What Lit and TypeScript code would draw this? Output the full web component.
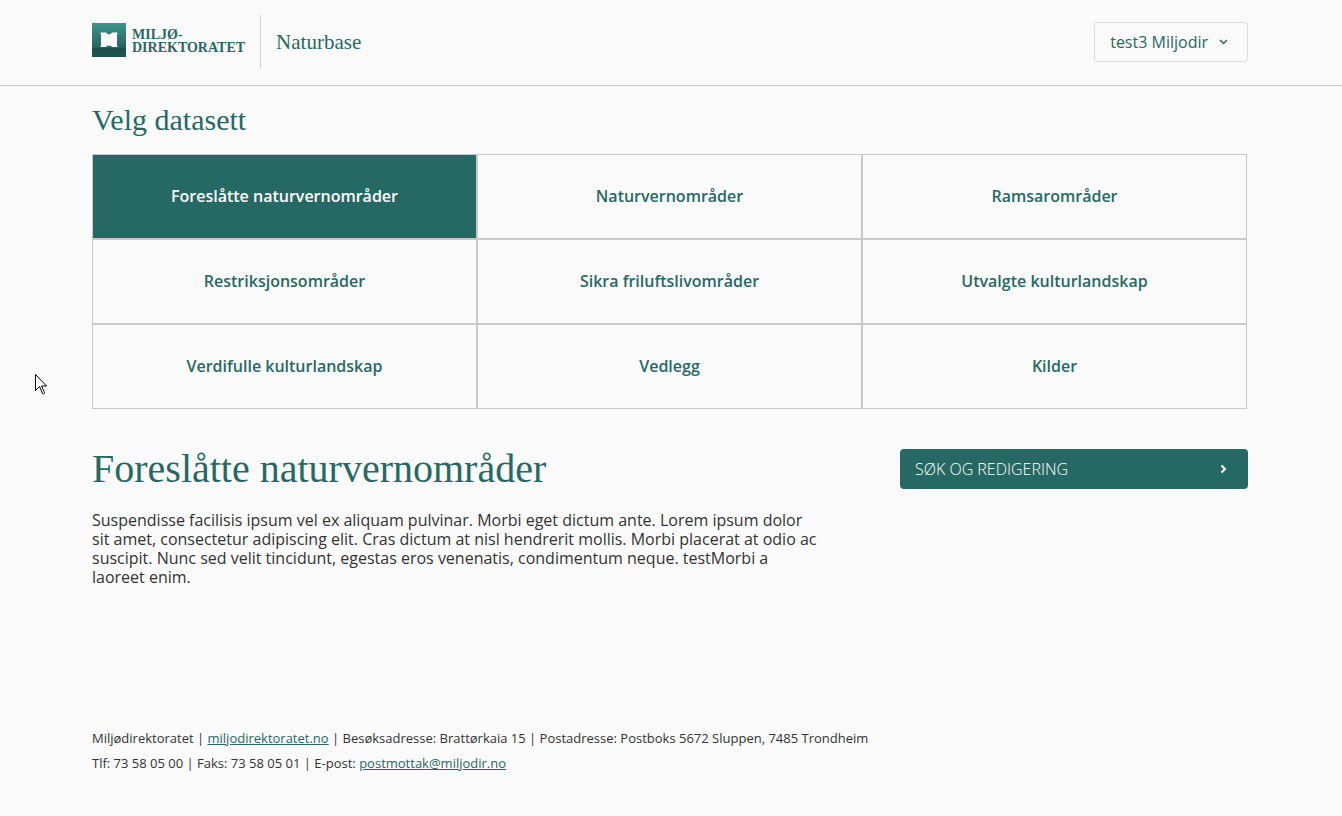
import { LitElement, html, css } from "lit";
import { customElement, state } from "lit/decorators.js";
import { classMap } from "lit/directives/class-map.js";

const DATASETS = [
  "Foreslåtte naturvernområder",
  "Naturvernområder",
  "Ramsarområder",
  "Restriksjonsområder",
  "Sikra friluftslivområder",
  "Utvalgte kulturlandskap",
  "Verdifulle kulturlandskap",
  "Vedlegg",
  "Kilder",
];

@customElement("app-root")
export class AppRoot extends LitElement {
  static styles = css`
    :host {
      --green: #266964;
      --line: #c9c9c9;
      --serif: "Liberation Serif", "Times New Roman", serif;
      display: block;
      position: relative;
      min-height: 100vh;
      background: #fafafa;
      color: #333;
      font: 400 16px/19px "Open Sans", sans-serif;
    }
    *, *::before, *::after { box-sizing: border-box; }
    .band { padding: 0 2px 0 0; }
    .shell { width: calc(100% - 40px); max-width: 1156px; margin: 0 auto; }
    .header { border-bottom: 1px solid var(--line); }
    .bar { display: flex; align-items: center; justify-content: space-between; padding: 15px 0 16px; }
    .brand { display: flex; align-items: center; }
    .logo { display: flex; align-items: center; gap: 6px; color: var(--green); text-decoration: none; margin: 0 15px 4px 0; }
    .mark { display: block; width: 34px; height: 34px; }
    .owner { padding-top: 2px; font: 700 14px/13px var(--serif); }
    .product { display: flex; align-items: center; height: 54px; padding-left: 15px; border-left: 1px solid #d5d5d5; color: var(--green); font: 400 21px/24px var(--serif); }
    .user { display: flex; align-items: center; gap: 10px; height: 40px; padding: 0 18px 0 15px; border: 1px solid #ddd; border-radius: 3px; background: #fafafa; color: var(--green); font: inherit; cursor: pointer; }
    h1, h2, p { margin: 0; }
    h2 { padding-top: 16px; color: var(--green); font: 400 30px/36px var(--serif); }
    .grid { display: grid; grid-template-columns: repeat(3, 1fr); margin: 16px 1px 0 0; }
    .cell { height: 85px; border: 1px solid var(--line); background: transparent; color: var(--green); font: 600 16px/19px "Open Sans", sans-serif; cursor: pointer; padding: 0 8px; }
    .cell.active { background: var(--green); color: #fff; }
    .detail { display: grid; grid-template-columns: 1fr 348px; gap: 20px; margin-top: 36px; align-items: start; }
    h1 { color: var(--green); font: 400 40px/48px var(--serif); }
    .text { max-width: 728px; margin-top: 18px; }
    .search { display: flex; align-items: center; justify-content: space-between; height: 40px; margin-top: 4px; padding: 0 20px 0 15px; border: 0; border-radius: 4px; background: var(--green); color: #fff; font: inherit; font-weight: 300; cursor: pointer; }
    .footer { margin-top: 139px; padding-bottom: 40px; font-size: 13px; line-height: 25px; }
    .footer a { color: var(--green); }
    .pointer { position: absolute; left: 35px; top: 374px; width: 12px; height: 21px; pointer-events: none; }
  `;

  @state() private selected = DATASETS[0];

  render() {
    return html`
      <header class="header band">
        <div class="shell bar">
          <div class="brand">
            <a class="logo" href="#">
              <svg class="mark" viewBox="0 0 34 34" aria-hidden="true">
                <defs>
                  <linearGradient id="shade" x1="0" y1="0" x2="0" y2="1">
                    <stop offset="0" stop-color="#3c968e" />
                    <stop offset="0.72" stop-color="#27635e" />
                    <stop offset="0.75" stop-color="#1d4f4b" />
                    <stop offset="1" stop-color="#1c5752" />
                  </linearGradient>
                </defs>
                <rect width="34" height="34" fill="url(#shade)" />
                <path d="M8.500 9.500H14L15.500 11.300H18.500L20 9.500H25.500L25 12V21.500L25.500 24H20L19 22.700H15L14 24H8.500L9 21.500V12Z" fill="#fafafa" />
              </svg>
              <span class="owner">MILJØ-<br />DIREKTORATET</span>
            </a>
            <span class="product">Naturbase</span>
          </div>
          <button class="user" type="button" aria-haspopup="menu">
            test3 Miljodir
            <svg width="11" height="10" viewBox="0 0 11 10" fill="none" stroke="currentColor" stroke-width="1.5" aria-hidden="true">
              <path d="M2 3l3.5 3.5L9 3" />
            </svg>
          </button>
        </div>
      </header>
      <div class="band">
        <main class="shell">
          <h2>Velg datasett</h2>
          <div class="grid">
            ${DATASETS.map(
              (name) => html`<button
                type="button"
                class=${classMap({ cell: true, active: name === this.selected })}
                aria-pressed=${name === this.selected}
                @click=${() => (this.selected = name)}
              >${name}</button>`
            )}
          </div>
          <section class="detail">
            <div>
              <h1>${this.selected}</h1>
              <p class="text">
                Suspendisse facilisis ipsum vel ex aliquam pulvinar. Morbi eget dictum ante. Lorem ipsum dolor
                sit amet, consectetur adipiscing elit. Cras dictum at nisl hendrerit mollis. Morbi placerat at odio ac
                suscipit. Nunc sed velit tincidunt, egestas eros venenatis, condimentum neque. testMorbi a
                laoreet enim.
              </p>
            </div>
            <button class="search" type="button">
              SØK OG REDIGERING
              <svg width="9" height="10" viewBox="0 0 9 10" fill="none" stroke="currentColor" stroke-width="2" aria-hidden="true">
                <path d="M2.500 1.500L6 5L2.500 8.500" />
              </svg>
            </button>
          </section>
        </main>
        <footer class="shell footer">
          <div>Miljødirektoratet | <a href="#">miljodirektoratet.no</a> | Besøksadresse: Brattørkaia 15 | Postadresse: Postboks 5672 Sluppen, 7485 Trondheim</div>
          <div>Tlf: 73 58 05 00 | Faks: 73 58 05 01 | E-post: <a href="#">postmottak@miljodir.no</a></div>
        </footer>
      </div>
      <svg class="pointer" viewBox="0 0 12 21" aria-hidden="true">
        <path d="M.5 .5v16l4-4 3 7c.5 1 2.500 0 2-1l-3-6.500h5z" fill="#fff" stroke="#000" />
      </svg>
    `;
  }
}
